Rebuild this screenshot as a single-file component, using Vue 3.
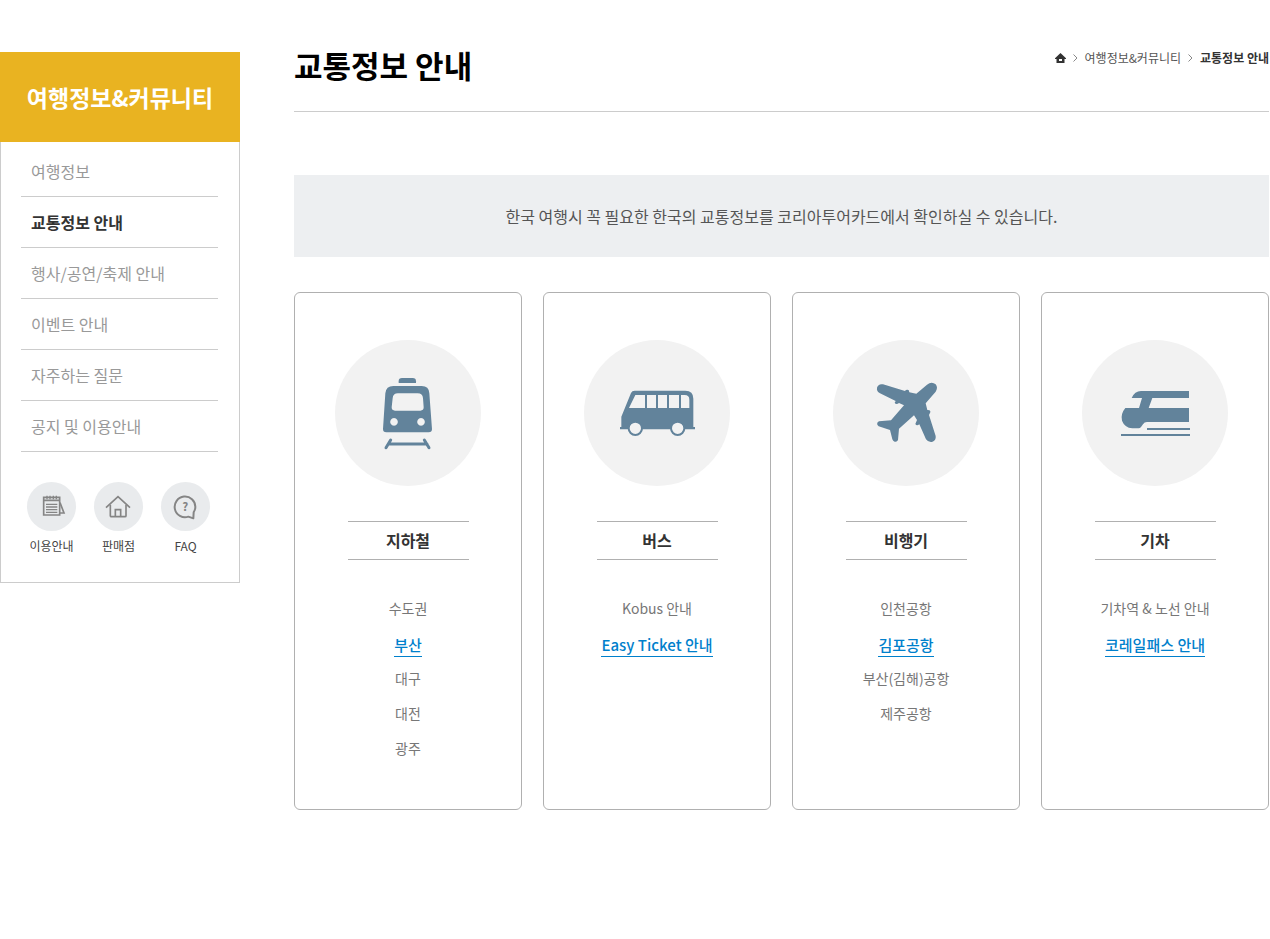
<script setup>
const menu = [
  { label: '여행정보' },
  { label: '교통정보 안내', current: true },
  { label: '행사/공연/축제 안내' },
  { label: '이벤트 안내' },
  { label: '자주하는 질문' },
  { label: '공지 및 이용안내' },
]

const cards = [
  {
    icon: 'subway',
    title: '지하철',
    links: [{ label: '수도권' }, { label: '부산', active: true }, { label: '대구' }, { label: '대전' }, { label: '광주' }],
  },
  {
    icon: 'bus',
    title: '버스',
    links: [{ label: 'Kobus 안내' }, { label: 'Easy Ticket 안내', active: true }],
  },
  {
    icon: 'plane',
    title: '비행기',
    links: [{ label: '인천공항' }, { label: '김포공항', active: true }, { label: '부산(김해)공항' }, { label: '제주공항' }],
  },
  {
    icon: 'train',
    title: '기차',
    links: [{ label: '기차역 & 노선 안내' }, { label: '코레일패스 안내', active: true }],
  },
]
</script>

<template>
  <div class="page">
    <aside class="sidebar">
      <h2 class="sidebar-title">여행정보&amp;커뮤니티</h2>
      <div class="sidebar-body">
        <nav>
          <ul class="menu">
            <li v-for="item in menu" :key="item.label">
              <a href="#" :class="{ current: item.current }">{{ item.label }}</a>
            </li>
          </ul>
        </nav>
        <ul class="quick">
          <li>
            <a href="#">
              <svg viewBox="81 66 147 147" aria-hidden="true">
                <g fill="none" stroke="#858585" stroke-width="5">
                  <path d="M131 112h48v53h-48z M131 121h48" />
                  <path d="M138 133h34 M138 141h34 M138 149h34 M138 157h34" stroke-width="4" />
                  <path d="M141 107v11 M150 107v11 M160 107v11 M169 107v11" stroke-width="4" />
                  <path d="M180 128l12 31h-12" />
                </g>
              </svg>
              <span>이용안내</span>
            </a>
          </li>
          <li>
            <a href="#">
              <svg viewBox="282 66 147 147" aria-hidden="true">
                <g fill="none" stroke="#858585" stroke-width="5">
                  <path d="M318 143l36-33 36 33" />
                  <path d="M331 134v33q0 3 3 3h41q3 0 3-3v-33" />
                  <path d="M346 170v-21h16v21" />
                </g>
              </svg>
              <span>판매점</span>
            </a>
          </li>
          <li>
            <a href="#">
              <svg viewBox="483 66 147 147" aria-hidden="true">
                <path
                  d="M565 170A31 31 0 1 1 586 141Q586 149 581 157L580 175Z"
                  fill="none"
                  stroke="#858585"
                  stroke-width="6"
                  stroke-linejoin="round"
                />
                <text x="556" y="153" class="mark">?</text>
              </svg>
              <span>FAQ</span>
            </a>
          </li>
        </ul>
      </div>
    </aside>

    <main class="content">
      <header class="heading">
        <h1>교통정보 안내</h1>
        <nav class="crumbs">
          <a href="#" aria-label="홈" class="home">
            <svg viewBox="0 0 11 10" width="11" height="10" aria-hidden="true">
              <path d="M5.5 0L11 5.2V6H9.500V10H1.500V6H0V5.200Z" fill="#333" />
              <path d="M4 6h3v2H4z" fill="#fff" />
            </svg>
          </a>
          <svg class="sep" viewBox="0 0 5 8" aria-hidden="true"><path d="M.5.500L4 4L.5 7.500" /></svg>
          <a href="#">여행정보&amp;커뮤니티</a>
          <svg class="sep" viewBox="0 0 5 8" aria-hidden="true"><path d="M.5.500L4 4L.5 7.500" /></svg>
          <strong>교통정보 안내</strong>
        </nav>
      </header>

      <p class="notice">한국 여행시 꼭 필요한 한국의 교통정보를 코리아투어카드에서 확인하실 수 있습니다.</p>

      <div class="cards">
        <section v-for="card in cards" :key="card.title" class="card">
          <svg class="pic" viewBox="30 30 438 438" aria-hidden="true">
            <g v-if="card.icon === 'subway'">
              <path d="M221 159v-5q0-10 10-10h32q10 0 10 10v5z" />
              <path
                fill-rule="evenodd"
                d="M205 168h85q22 0 23 22l8 107q0 10-10 10H184q-10 0-10-10l7-107q2-22 24-22z M219 190q-15 0-16 15l-3 27q0 10 10 10h76q10 0 10-10l-2-27q-1-15-16-15z M207 264a11.500 11.500 0 1 0 .1 0z M288 264a11.500 11.500 0 1 0 .1 0z"
              />
              <path d="M197 330l-14 23 M298 330l14 23 M190 342h116" fill="none" stroke="#62839b" stroke-width="9" stroke-linecap="round" />
            </g>
            <g v-else-if="card.icon === 'bus'">
              <path
                fill-rule="evenodd"
                d="M182 182h152q24 0 24 24v85h5v7H138v-7h4v-31l29-71q3-7 11-7z M184 195l-19 39h48v-39z M219 195v39h27v-39z M252 195v39h27v-39z M285 195v39h30v-39z M321 195v39h25v-25q0-14-14-14z"
              />
              <circle cx="184" cy="295" r="20" fill="#f2f2f2" stroke="#62839b" stroke-width="6" />
              <circle cx="311" cy="295" r="20" fill="#f2f2f2" stroke="#62839b" stroke-width="6" />
            </g>
            <path
              v-else-if="card.icon === 'plane'"
              d="M180 163L246 183Q249 178 257 180L259 187L280 191L312 164Q326 153 338 163Q346 173 338 185L308 220L313 240Q323 239 322 247L318 255L338 318Q340 332 327 336Q316 338 309 328L289 283Q281 289 277 282L282 270L273 256L228 296L225 330Q222 337 215 335Q210 334 208 328L201 300L167 289Q160 284 164 277L168 274L204 271L243 226L228 219Q219 226 215 218L218 213L171 190Q160 184 162 173Q166 160 180 163Z"
            />
            <g v-else>
              <path d="M179 204Q188 183 207 183H351V204H241L230 234H351V276H225Q217 276 213 283L207 291Q204 295 200 295H181Q158 293 150 272Q145 252 160 234H201L210 204Z" />
              <path d="M225 294h129v6H225z M147 312h207v6H147z" />
            </g>
          </svg>
          <h3>{{ card.title }}</h3>
          <ul class="links">
            <li v-for="link in card.links" :key="link.label">
              <a href="#" :class="{ active: link.active }">{{ link.label }}</a>
            </li>
          </ul>
        </section>
      </div>
    </main>
  </div>
</template>

<style>
body {
  margin: 0;
  background: #fff;
}
</style>

<style scoped>
.page {
  display: flex;
  align-items: flex-start;
  gap: 54px;
  padding: 42px 1px 40px 0;
  font-family: 'Noto Sans CJK KR', sans-serif;
  color: #333;
}
h1,
h2,
h3,
p,
ul {
  margin: 0;
  padding: 0;
}
ul {
  list-style: none;
}
a {
  color: inherit;
  text-decoration: none;
}
.sidebar {
  flex: 0 0 240px;
  margin-top: 10px;
}
.sidebar-title {
  background: #e9b321;
  color: #fff;
  font-size: 23px;
  font-weight: 700;
  line-height: 90px;
  text-align: center;
}
.sidebar-body {
  border: 1px solid #ccc;
  border-top: 0;
  padding: 4px 21px 26px 20px;
}
.menu a {
  display: block;
  padding-left: 10px;
  border-bottom: 1px solid #ccc;
  font-size: 16px;
  line-height: 50px;
  color: #999;
}
.menu .current {
  color: #333;
  font-weight: 700;
}
.quick {
  display: flex;
  gap: 18px;
  margin-top: 30px;
  padding-left: 6px;
}
.quick a {
  display: flex;
  flex-direction: column;
  align-items: center;
  gap: 5px;
  width: 49px;
  font-size: 12px;
  line-height: 20px;
  white-space: nowrap;
  color: #444;
}
.quick svg {
  width: 49px;
  height: 49px;
  border-radius: 50%;
  background: #e9ebed;
}
.mark {
  font-size: 35px;
  font-weight: 700;
  text-anchor: middle;
  fill: #858585;
}
.content {
  flex: 1;
  min-width: 0;
}
.heading {
  display: flex;
  justify-content: space-between;
  align-items: flex-start;
  padding-bottom: 23px;
  border-bottom: 1px solid #ccc;
}
h1 {
  font-size: 31px;
  font-weight: 700;
  line-height: 46px;
  color: #000;
}
.crumbs {
  display: flex;
  align-items: center;
  margin-top: 6px;
  font-size: 12px;
  line-height: 20px;
  color: #555;
}
.crumbs strong {
  color: #333;
}
.home {
  display: flex;
}
.sep {
  width: 5px;
  height: 8px;
  margin: 0 7px;
  fill: none;
  stroke: #888;
}
.notice {
  margin-top: 63px;
  background: #edeff1;
  font-size: 16px;
  line-height: 82px;
  text-align: center;
  color: #555;
}
.cards {
  display: grid;
  grid-template-columns: repeat(4, 1fr);
  gap: 21px;
  margin-top: 35px;
}
.card {
  display: flex;
  flex-direction: column;
  align-items: center;
  padding: 47px 0 42px;
  border: 1px solid #b0b0b0;
  border-radius: 6px;
}
.pic {
  width: 146px;
  height: 146px;
  border-radius: 50%;
  background: #f2f2f2;
  fill: #62839b;
}
h3 {
  width: 121px;
  margin-top: 35px;
  border: solid #b0b0b0;
  border-width: 1px 0;
  font-size: 16px;
  line-height: 37px;
  text-align: center;
}
.links {
  margin-top: 32px;
  font-size: 14px;
  line-height: 32px;
  text-align: center;
  color: #777;
}
.links li {
  display: flex;
  align-items: flex-start;
  justify-content: center;
  height: 35px;
}
.links .active {
  align-self: center;
  border-bottom: 1px solid #0080cc;
  font-size: 15px;
  font-weight: 500;
  line-height: 23px;
  color: #0080cc;
}
</style>
